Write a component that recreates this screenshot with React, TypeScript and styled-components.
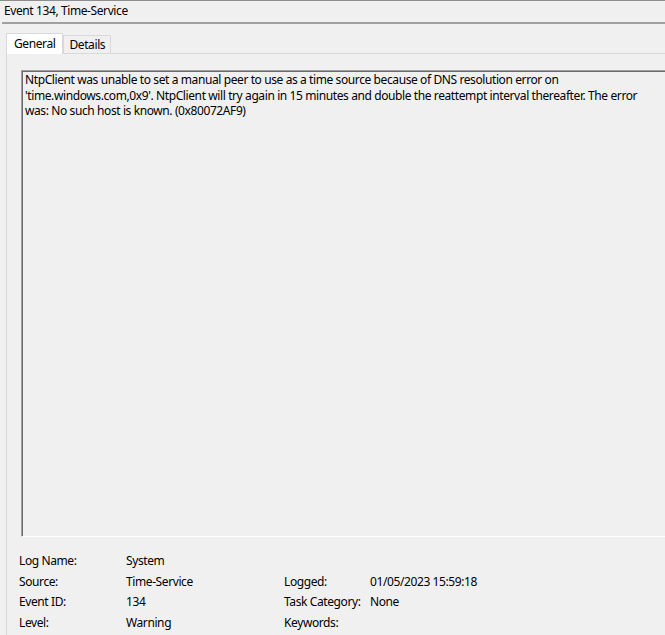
import React from "react";
import styled, { createGlobalStyle } from "styled-components";

const GlobalStyle = createGlobalStyle`
  html, body { margin: 0; padding: 0; background: #f0f0f0; }
  body {
    font-family: "Noto Sans", "Open Sans", sans-serif;
    font-size: 12px;
    letter-spacing: -0.4px;
    color: #000;
  }
`;

const Window = styled.div`
  width: 665px;
  height: 635px;
  overflow: hidden;
  background: #f0f0f0;
  border-top: 1px solid #8e8e8e;
  box-sizing: border-box;
`;

const TitleBar = styled.div`
  height: 21px;
  line-height: 20px;
  padding-left: 2px;
  margin-left: 2px;
  white-space: nowrap;
  border-bottom: 2px solid #a0a0a0;
`;

const Body = styled.div`
  padding: 8px 0 0 6px;
`;

const TabStrip = styled.div`
  display: flex;
  align-items: flex-end;
  height: 21px;
`;

const Tab = styled.div<{ $active?: boolean }>`
  box-sizing: border-box;
  height: ${(p) => (p.$active ? 21 : 18)}px;
  padding: ${(p) => (p.$active ? "0 7px" : "0 5px")};
  line-height: ${(p) => (p.$active ? 19 : 18)}px;
  border: 1px solid #d9d9d9;
  border-bottom: none;
  background: ${(p) => (p.$active ? "#ffffff" : "#f0f0f0")};
  margin-bottom: ${(p) => (p.$active ? -1 : 0)}px;
  position: relative;
  z-index: ${(p) => (p.$active ? 1 : 0)};
  white-space: nowrap;
`;

const TabPanel = styled.div`
  border: 1px solid #d9d9d9;
  border-right: none;
  border-bottom: none;
  padding: 16px 0 0 14px;
  height: 600px;
  box-sizing: border-box;
`;

const MessageBox = styled.div`
  width: 700px;
  height: 467px;
  box-sizing: border-box;
  border: 1px solid;
  border-color: #a0a0a0 #ffffff #ffffff #a0a0a0;
  box-shadow: inset 1px 1px 0 #696969;
  padding: 1px 0 0 3px;
  line-height: 15.5px;
  white-space: pre-line;
`;

const Fields = styled.div`
  display: grid;
  grid-template-columns: 107px 158px 86px auto;
  grid-auto-rows: 20.7px;
  align-items: center;
  margin: 13px 0 0 -2px;
  white-space: nowrap;
`;

const Cell = styled.span``;

const message =
  "NtpClient was unable to set a manual peer to use as a time source because of DNS resolution error on\n" +
  "'time.windows.com,0x9'. NtpClient will try again in 15 minutes and double the reattempt interval thereafter. The error\n" +
  "was: No such host is known. (0x80072AF9)";

const rows: [string, string, string, string][] = [
  ["Log Name:", "System", "", ""],
  ["Source:", "Time-Service", "Logged:", "01/05/2023 15:59:18"],
  ["Event ID:", "134", "Task Category:", "None"],
  ["Level:", "Warning", "Keywords:", ""],
];

export default function App() {
  return (
    <>
      <GlobalStyle />
      <Window>
        <TitleBar>Event 134, Time-Service</TitleBar>
        <Body>
          <TabStrip>
            <Tab $active>General</Tab>
            <Tab>Details</Tab>
          </TabStrip>
          <TabPanel>
            <MessageBox>{message}</MessageBox>
            <Fields>
              {rows.map((r, i) =>
                r.map((c, j) => <Cell key={`${i}-${j}`}>{c}</Cell>)
              )}
            </Fields>
          </TabPanel>
        </Body>
      </Window>
    </>
  );
}
